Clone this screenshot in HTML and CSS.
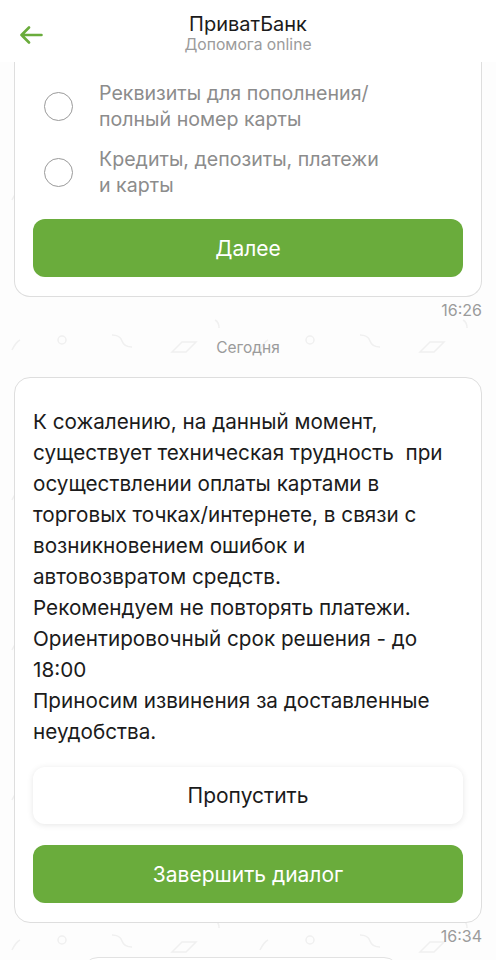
FILE: index.html
```html
<!DOCTYPE html>
<html lang="ru">
<head>
    <meta charset="UTF-8">
    <meta name="viewport" content="width=device-width, initial-scale=1.0">
    <title>ПриватБанк — Допомога online</title>
    <link rel="stylesheet" href="styles.css">
</head>
<body>
    <header class="top-bar">
        <button class="back-btn" aria-label="Назад">
            <svg width="24" height="18" viewBox="0 0 24 18">
                <path d="M22.5 9H2.5M10 1.5L2.5 9l7.5 7.5" fill="none" stroke="#6aac3c" stroke-width="2.6" stroke-linecap="round" stroke-linejoin="round"/>
            </svg>
        </button>
        <div class="top-title">
            <div class="bank-name">ПриватБанк</div>
            <div class="bank-sub">Допомога online</div>
        </div>
    </header>

    <main class="chat">
        <div class="bubble bubble-cut">
            <div class="options">
                <label class="option">
                    <span class="radio"></span>
                    <span class="option-text">Реквизиты для пополнения/<br>полный номер карты</span>
                </label>
                <label class="option">
                    <span class="radio"></span>
                    <span class="option-text">Кредиты, депозиты, платежи<br>и карты</span>
                </label>
            </div>
            <button class="btn btn-green">Далее</button>
        </div>
        <div class="msg-time">16:26</div>

        <div class="day-label">Сегодня</div>

        <div class="bubble">
            <p class="msg-text">
                К сожалению, на данный момент,<br>
                существует техническая трудность&nbsp; при<br>
                осуществлении оплаты картами в<br>
                торговых точках/интернете, в связи с<br>
                возникновением ошибок и<br>
                автовозвратом средств.<br>
                Рекомендуем не повторять платежи.<br>
                Ориентировочный срок решения - до<br>
                18:00<br>
                Приносим извинения за доставленные<br>
                неудобства.
            </p>
            <button class="btn btn-white">Пропустить</button>
            <button class="btn btn-green">Завершить диалог</button>
        </div>
        <div class="msg-time">16:34</div>

        <div class="bubble-next"></div>
    </main>
</body>
</html>
```

FILE: styles.css
```css
body {
    margin: 0;
    width: 496px;
    height: 960px;
    overflow: hidden;
    font-family: Inter, 'Noto Sans', sans-serif;
    background-color: #fdfdfd;
    background-image: url("data:image/svg+xml;utf8,<svg xmlns='http://www.w3.org/2000/svg' width='248' height='150'><g fill='none' stroke='%23f0f0f0' stroke-width='1.5'><circle cx='62' cy='50' r='4'/><path d='M112 45q8 0 10 6t10 6'/><path d='M172 62l10-10h14l-10 10z'/><path d='M12 60q4-8 8-10'/><path d='M215 30q4 2 4 8'/></g></svg>");
    background-position: 0 290px;
}

.top-bar {
    position: relative;
    height: 62px;
    background: #fff;
    display: flex;
    justify-content: center;
}

.back-btn {
    position: absolute;
    left: 19px;
    top: 26px;
    padding: 0;
    border: none;
    background: none;
}

.back-btn svg {
    display: block;
}

.top-title {
    text-align: center;
    padding-top: 12px;
}

.bank-name {
    font-size: 20px;
    line-height: 24px;
    color: #1b1b1b;
}

.bank-sub {
    font-size: 15.7px;
    line-height: 18px;
    color: #9b9b9b;
}

.chat {
    padding: 0 14px;
}

.bubble {
    background: #fff;
    border: 1px solid #dedede;
    border-radius: 16px;
    padding: 28px 18px 19px;
    display: flex;
    flex-direction: column;
}

.bubble-cut {
    border-top: none;
    border-radius: 0 0 16px 16px;
    padding-top: 18px;
}

.options {
    display: flex;
    flex-direction: column;
    gap: 14px;
    margin-bottom: 21px;
}

.option {
    display: flex;
    align-items: center;
    gap: 26px;
    padding-left: 11px;
}

.radio {
    flex: none;
    width: 27px;
    height: 27px;
    border: 1.5px solid #9a9a9a;
    border-radius: 50%;
}

.option-text {
    font-size: 19.6px;
    line-height: 26px;
    color: #8c8c8c;
}

.btn {
    height: 58px;
    border: none;
    border-radius: 12px;
    font-family: inherit;
    font-size: 21px;
}

.btn-green {
    background: #6aac3c;
    color: #fff;
}

.btn-white {
    height: 57px;
    background: #fff;
    color: #1b1b1b;
    box-shadow: 0 1px 6px rgba(0,0,0,0.1);
    margin-bottom: 21px;
}

.msg-time {
    text-align: right;
    font-size: 16px;
    line-height: 18px;
    color: #9b9b9b;
    margin-top: 4px;
}

.day-label {
    text-align: center;
    font-size: 15.5px;
    line-height: 18px;
    color: #9b9b9b;
    margin: 20px 0;
}

.msg-text {
    margin: 0 0 20px;
    font-size: 20.7px;
    line-height: 31px;
    color: #1b1b1b;
}

.bubble-next {
    margin: 12px 82px 0 68px;
    height: 30px;
    background: #fff;
    border: 1px solid #e2e2e2;
    border-radius: 16px 16px 0 0;
}
```
